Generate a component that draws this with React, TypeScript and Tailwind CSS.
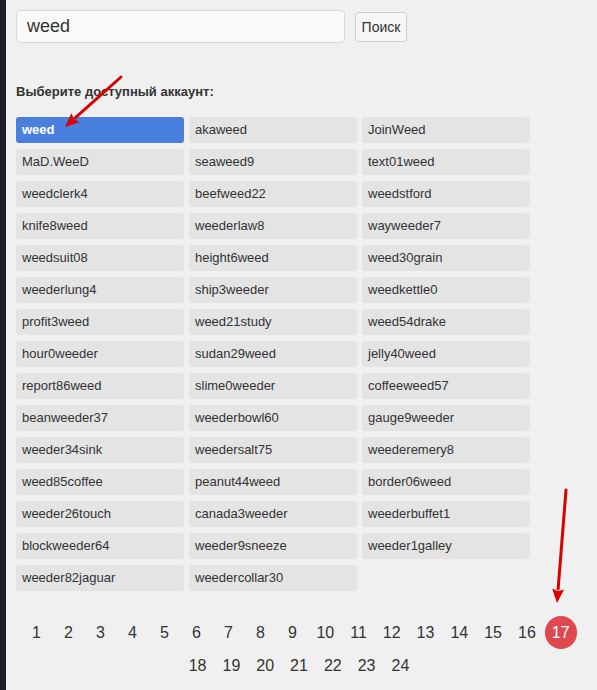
const accounts = [
	["weed", "akaweed", "JoinWeed"],
	["MaD.WeeD", "seaweed9", "text01weed"],
	["weedclerk4", "beefweed22", "weedstford"],
	["knife8weed", "weederlaw8", "wayweeder7"],
	["weedsuit08", "height6weed", "weed30grain"],
	["weederlung4", "ship3weeder", "weedkettle0"],
	["profit3weed", "weed21study", "weed54drake"],
	["hour0weeder", "sudan29weed", "jelly40weed"],
	["report86weed", "slime0weeder", "coffeeweed57"],
	["beanweeder37", "weederbowl60", "gauge9weeder"],
	["weeder34sink", "weedersalt75", "weederemery8"],
	["weed85coffee", "peanut44weed", "border06weed"],
	["weeder26touch", "canada3weeder", "weederbuffet1"],
	["blockweeder64", "weeder9sneeze", "weeder1galley"],
	["weeder82jaguar", "weedercollar30"],
].flat();

const pagesTop = Array.from({ length: 17 }, (_, i) => i + 1);
const pagesBottom = Array.from({ length: 7 }, (_, i) => i + 18);

const PageLink = ({ n, active }: { n: number; active?: boolean }) => (
	<span
		className={
			active
				? "mx-[1px] flex h-[33px] min-w-[30px] items-center justify-center rounded-full bg-[#dc4a4f] px-[7px] text-white"
				: "mx-[1px] flex h-[33px] min-w-[30px] items-center justify-center px-[7px] text-[#333]"
		}
	>
		{n}
	</span>
);

const Arrow = ({ x1, y1, x2, y2 }: { x1: number; y1: number; x2: number; y2: number }) => {
	const a = Math.atan2(y2 - y1, x2 - x1);
	const len = 14;
	const w = 6;
	const bx = x2 - len * Math.cos(a);
	const by = y2 - len * Math.sin(a);
	const px = -Math.sin(a) * w;
	const py = Math.cos(a) * w;
	return (
		<g>
			<line x1={x1} y1={y1} x2={bx} y2={by} stroke="#d90000" strokeWidth={3} strokeLinecap="round" />
			<polygon
				points={`${x2},${y2} ${bx + px},${by + py} ${bx + 0.5 * (x2 - bx) * 0.3},${by + 0.5 * (y2 - by) * 0.3} ${bx - px},${by - py}`}
				fill="#d90000"
			/>
		</g>
	);
};

export default function App() {
	return (
		<div className="relative flex min-h-[690px] w-[597px] bg-[#f0f0f0] font-['Liberation_Sans',Arial,sans-serif] text-[#333]">
			<div className="w-[6px] shrink-0 bg-[#1c1d26]" />
			<main className="flex-1 pl-[10px] pr-[11px] pt-[10px]">
				<div className="flex items-start gap-[10px]">
					<input
						readOnly
						value="weed"
						className="h-[33px] w-[329px] rounded-[4px] border border-[#d9d9d9] bg-[#f9f9f9] px-[10px] text-[18px] text-[#333] outline-none"
					/>
					<button className="mt-[2px] h-[30px] w-[52px] rounded-[3px] border border-[#cfcfcf] bg-[#f6f6f6] text-[14px] text-[#333]">
						Поиск
					</button>
				</div>

				<h3 className="mt-[41px] text-[13px] font-bold leading-[16px] text-[#333]">
					Выберите доступный аккаунт:
				</h3>

				<div className="mt-[17px] grid w-[514px] grid-cols-3 gap-x-[5px] gap-y-[6px]">
					{accounts.map((name, i) => (
						<div
							key={name}
							className={
								i === 0
									? "flex h-[26px] items-center rounded-[3px] bg-[#4a80dd] px-[6px] text-[13px] font-bold text-white"
									: "flex h-[26px] items-center rounded-[3px] bg-[#e4e4e4] px-[6px] text-[13px] text-[#333]"
							}
						>
							{name}
						</div>
					))}
				</div>

				<div className="mt-[25px] flex flex-col items-center pr-[4px] text-[16px]">
					<div className="flex">
						{pagesTop.map((n) => (
							<PageLink key={n} n={n} active={n === 17} />
						))}
					</div>
					<div className="flex">
						{pagesBottom.map((n) => (
							<PageLink key={n} n={n} />
						))}
					</div>
				</div>
			</main>

			<svg className="pointer-events-none absolute left-0 top-0" width={597} height={690}>
				<Arrow x1={121} y1={77} x2={65} y2={127} />
				<Arrow x1={566} y1={490} x2={557} y2={603} />
			</svg>
		</div>
	);
}
